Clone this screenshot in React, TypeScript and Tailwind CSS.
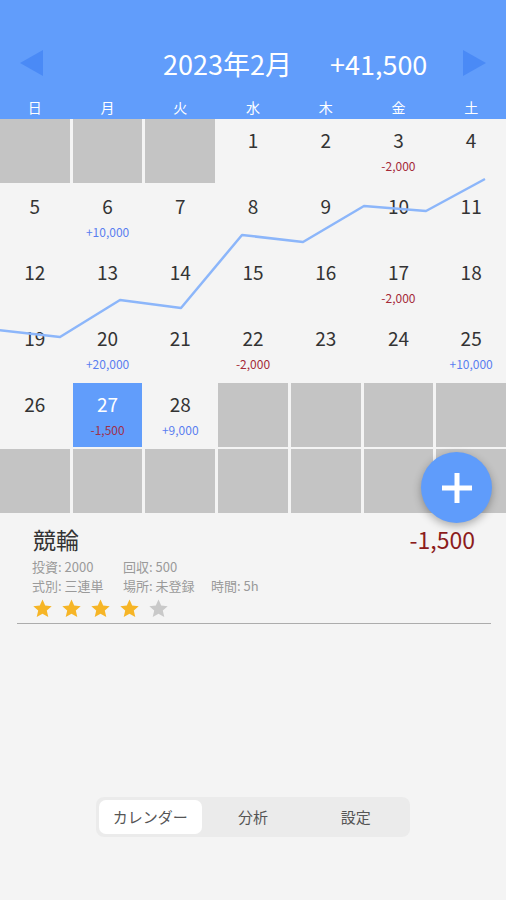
import React from 'react';

const WEEKDAYS = ['日', '月', '火', '水', '木', '金', '土'];

// Feb 2023 starts on a Wednesday
const amounts: Record<number, number> = {
  3: -2000,
  6: 10000,
  17: -2000,
  20: 20000,
  22: -2000,
  25: 10000,
  27: -1500,
  28: 9000,
};

const fmt = (n: number) => (n > 0 ? '+' : '-') + Math.abs(n).toLocaleString('en-US');

const chartPoints = '-2,211 60,218 120,181 181,189 242,116 303,123 364,87 426,92 485,60';

const Star = ({ filled }: { filled: boolean }) => (
  <svg className="w-[21px] h-[21px]" viewBox="0 0 24 24" fill={filled ? '#f6b526' : '#c9c9c9'}>
    <path d="M12 1.8l3.1 6.9 7.4.7-5.6 5 1.7 7.4L12 17.9l-6.6 3.9 1.7-7.4-5.6-5 7.4-.7z" />
  </svg>
);

const App = () => {
  const cells: (number | null)[] = [];
  for (let i = 0; i < 42; i++) {
    const d = i - 2;
    cells.push(d >= 1 && d <= 28 ? d : null);
  }

  return (
    <div
      className="w-[506px] h-[900px] bg-[#f4f4f4] flex flex-col overflow-hidden"
      style={{ fontFamily: '"Noto Sans CJK JP", "Noto Sans", sans-serif' }}
    >
      {/* header */}
      <div className="bg-[#619dfb] h-[119px] flex flex-col">
        <div className="mt-[44px] h-[38px] flex items-center px-[18px]">
          <svg className="w-[26px] h-[30px]" viewBox="0 0 26 30">
            <path d="M2 15L25 2v26z" fill="#4a8af6" />
          </svg>
          <span className="ml-[119px] text-white text-[27px] leading-none">2023年2月</span>
          <span className="ml-[38px] text-white text-[27px] leading-none">+41,500</span>
          <svg className="ml-auto w-[26px] h-[30px]" viewBox="0 0 26 30">
            <path d="M24 15L1 2v26z" fill="#4a8af6" />
          </svg>
        </div>
        <div className="mt-[16px] h-[21px] grid grid-cols-7 gap-x-[3px]">
          {WEEKDAYS.map((w) => (
            <div key={w} className="text-center text-white text-[14px] leading-[19px]">
              {w}
            </div>
          ))}
        </div>
      </div>

      {/* calendar */}
      <div className="relative">
        <div className="grid grid-cols-7 gap-x-[3px] gap-y-[2px] auto-rows-[64px]">
          {cells.map((d, i) => {
            if (d === null) return <div key={i} className="bg-[#c4c4c4]" />;
            const amt = amounts[d];
            const selected = d === 27;
            return (
              <div
                key={i}
                className={`flex flex-col items-center pt-[7px] ${selected ? 'bg-[#619dfb]' : ''}`}
              >
                <span className={`text-[19px] leading-[28px] ${selected ? 'text-white' : 'text-[#333333]'}`}>{d}</span>
                {amt !== undefined && (
                  <span
                    className={`mt-[4px] text-[12px] leading-[16px] ${
                      amt > 0 ? 'text-[#5a7ef0]' : selected ? 'text-[#a0304a]' : 'text-[#a52a38]'
                    }`}
                  >
                    {fmt(amt)}
                  </span>
                )}
              </div>
            );
          })}
        </div>
        <svg className="absolute left-0 top-0 w-[506px] h-[394px] pointer-events-none" viewBox="0 0 506 394">
          <polyline points={chartPoints} fill="none" stroke="#8cb6fa" strokeWidth={2.5} strokeLinejoin="round" />
        </svg>
        <button className="absolute right-[14px] top-[333px] w-[71px] h-[71px] rounded-full bg-[#5f9cfb] shadow-[0_3px_8px_rgba(0,0,0,0.3)] flex items-center justify-center">
          <svg className="w-[32px] h-[32px]" viewBox="0 0 32 32">
            <path d="M16 1v30M1 16h30" stroke="white" strokeWidth={5} />
          </svg>
        </button>
      </div>

      {/* detail */}
      <div className="pt-[11px]">
        <div className="flex items-center justify-between pl-[33px] pr-[31px]">
          <span className="text-[23px] leading-[31px] text-[#333333]">競輪</span>
          <span className="text-[23px] leading-[31px] text-[#8c1c1c]">-1,500</span>
        </div>
        <div className="pl-[32px] mt-[3px] flex text-[13px] leading-[17px] text-[#9a9a9a]">
          <span className="w-[91px]">投資: 2000</span>
          <span>回収: 500</span>
        </div>
        <div className="pl-[32px] mt-[2px] flex text-[13px] leading-[17px] text-[#9a9a9a]">
          <span className="w-[91px]">式別: 三連単</span>
          <span className="w-[88px]">場所: 未登録</span>
          <span>時間: 5h</span>
        </div>
        <div className="pl-[32px] mt-[4px] flex gap-[8px]">
          <Star filled />
          <Star filled />
          <Star filled />
          <Star filled />
          <Star filled={false} />
        </div>
        <div className="mt-[4px] ml-[17px] mr-[15px] h-px bg-[#acacac]" />
      </div>

      {/* tabs */}
      <div className="mt-auto mb-[63px] mx-auto w-[314px] h-[40px] bg-[#ebebeb] rounded-[8px] p-[3px] grid grid-cols-3 text-[15px] text-[#555555]">
        <div className="bg-white rounded-[7px] flex items-center justify-center">カレンダー</div>
        <div className="flex items-center justify-center">分析</div>
        <div className="flex items-center justify-center">設定</div>
      </div>
    </div>
  );
};

export default App;
